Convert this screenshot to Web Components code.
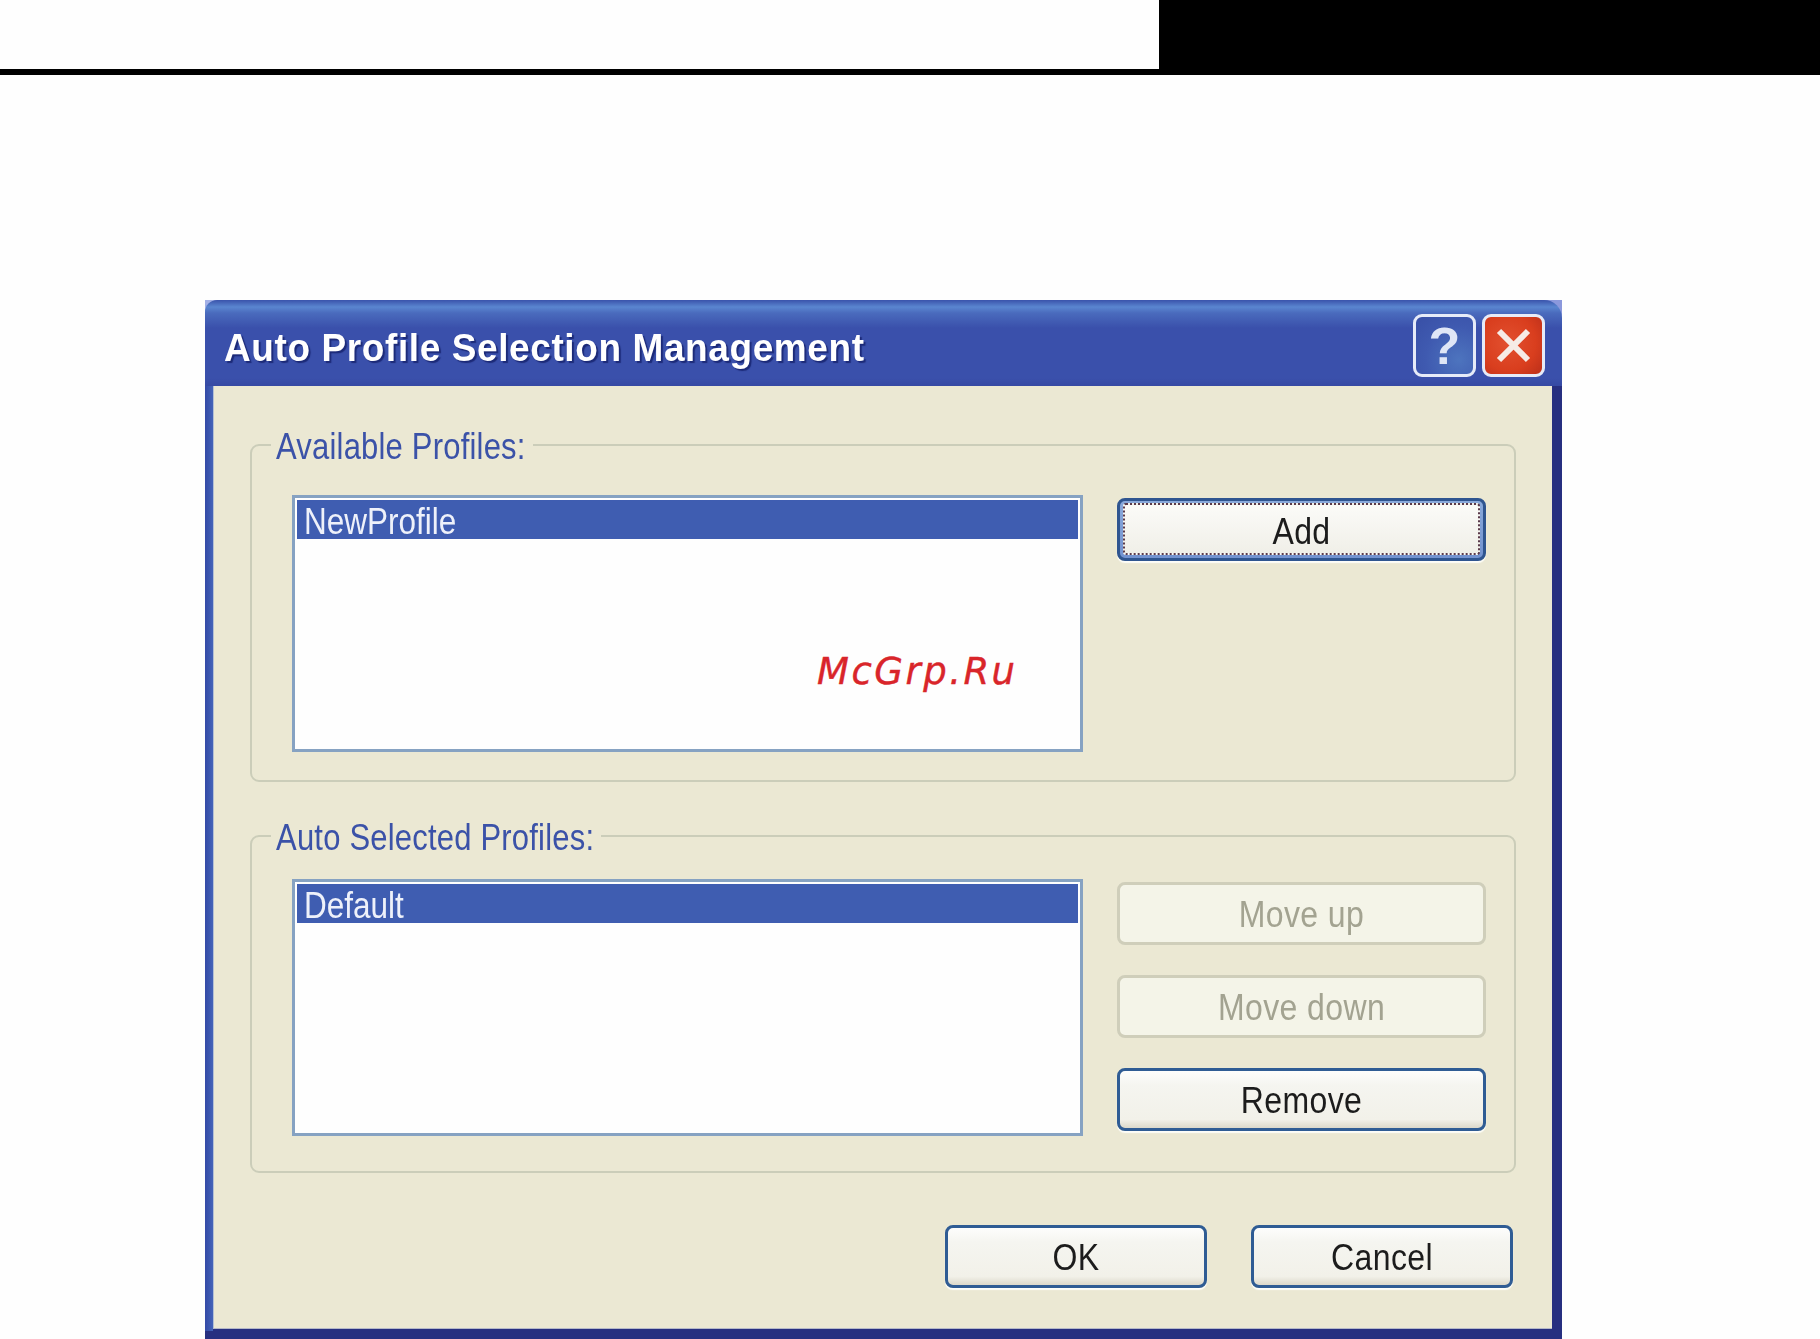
<!DOCTYPE html>
<html>
<head>
<meta charset="utf-8">
<title>Auto Profile Selection Management</title>
<style>
    html,body{
        margin: 0;
        height: 1339px;
        overflow: hidden;
        background: #fefefe;
        font-family: "Liberation Sans", Arial, sans-serif;
    }
</style>
</head>
<body>
<template page-banner>
    <style>
        :host{
            display: flex;
            height: 75px;
            background: #000;
        }
        #blank{
            width: 1159px;
            height: 69px;
            background: #fefefe;
        }
    </style>
    <div id=blank></div>
</template>

<template xp-window>
    <style>
        :host{
            display: flex;
            flex-direction: column;
            width: 1357px;
            height: 1039px;
            margin: 225px 0 0 205px;
            filter: blur(.7px);
        }
        #corners{
            background: linear-gradient(90deg, #a3b0e6 14px, transparent 14px, transparent calc(100% - 18px), #8b98dc calc(100% - 18px));
        }
        #titlebar{
            display: flex;
            height: 86px;
            padding-right: 17px;
            border-radius: 12px 18px 0 0;
            background: linear-gradient(#3a53ab 0, #5a86d0 7px, #4a6bbd 13px, #3a50ab 28px, #3a50ab 78px, #3549a3 86px);
        }
        #title{
            flex: 1;
            padding: 28px 0 0 19px;
            font-size: 37px;
            line-height: 40px;
            font-weight: bold;
            letter-spacing: .6px;
            white-space: nowrap;
            color: #fff;
            text-shadow: 2px 2px 1px #1c2a78;
        }
        #title span{
            display: inline-block;
            transform: scaleY(1.05);
        }
        #caption{
            display: flex;
            gap: 6px;
            padding-top: 14px;
        }
        #frame{
            flex: 1;
            display: flex;
            min-height: 0;
            padding: 0 10px 10px 8px;
            background:
                linear-gradient(90deg, #3349a6, #4464b9) left top / 8px calc(100% - 8px) no-repeat,
                #272f80;
        }
        #client{
            flex: 1;
            display: flex;
            flex-direction: column;
            padding: 39px 36px 0 37px;
            background: #ebe8d3;
            box-shadow: inset 0 -1px 0 #b4b8c8, inset 1px 0 0 #b4bfd4;
        }
        #footer{
            display: flex;
            justify-content: flex-end;
            gap: 44px;
            margin: 18px 3px 0 0;
        }
        ::slotted(xp-group){
            margin-bottom: 34px;
        }
    </style>
    <div id=corners>
        <div id=titlebar>
            <div id=title><span></span></div>
            <div id=caption>
                <xp-caption-button kind="help"></xp-caption-button>
                <xp-caption-button kind="close"></xp-caption-button>
            </div>
        </div>
    </div>
    <div id=frame>
        <div id=client>
            <slot></slot>
            <div id=footer><slot name=footer></slot></div>
        </div>
    </div>
</template>

<template xp-caption-button>
    <style>
        :host{
            display: block;
            width: 63px;
            height: 63px;
        }
        #box{
            box-sizing: border-box;
            display: flex;
            align-items: center;
            justify-content: center;
            height: 100%;
            border: 3px solid #e6ebf8;
            border-radius: 9px;
            color: #dfe6f6;
            font-size: 52px;
            font-weight: bold;
            line-height: 1;
            font-family: "Liberation Sans", Arial, sans-serif;
        }
        #box.help{
            background: radial-gradient(circle at 75% 75%, #4d74be, #3f5ab0 55%, #384fa6);
        }
        #box.close{
            background: radial-gradient(circle at 40% 45%, #e2502f, #d93e1e 60%, #bb2f1a);
        }
        svg{
            width: 41px;
            height: 41px;
        }
    </style>
    <div id=box></div>
</template>

<template xp-group>
    <style>
        :host{
            display: block;
        }
        fieldset{
            margin: 0;
            padding: var(--pad-top) 28px var(--pad-bottom) 40px;
            border: 2px solid #cbcdb9;
            border-radius: 9px;
            min-width: 0;
        }
        legend{
            margin-left: -21px;
            padding: 0 7px 0 5px;
            font-size: 31px;
            line-height: 40px;
            letter-spacing: .2px;
            color: #3b52a8;
        }
        legend span{
            display: inline-block;
            transform: translateY(2px) scaleY(1.18);
        }
        #row{
            display: flex;
            gap: 34px;
        }
        #side{
            display: flex;
            flex-direction: column;
            gap: 30px;
            flex: 1;
            padding-top: 3px;
        }
    </style>
    <fieldset>
        <legend><span></span></legend>
        <div id=row>
            <slot name=list></slot>
            <div id=side><slot></slot></div>
        </div>
    </fieldset>
</template>

<template xp-listbox>
    <style>
        :host{
            display: block;
            box-sizing: border-box;
            width: 791px;
            height: 257px;
            padding: 2px;
            border: 3px solid #86a2c2;
            background: #fefefe;
        }
        #item{
            height: 39px;
            padding-left: 7px;
            background: #3f5db1;
            color: #eef1fa;
            font-size: 31.5px;
            line-height: 39px;
        }
        #item span{
            display: inline-block;
            transform: translateY(2px) scaleY(1.18);
        }
    </style>
    <div id=item><span><slot></slot></span></div>
</template>

<template xp-button>
    <style>
        :host{
            display: block;
            box-sizing: border-box;
            height: 63px;
            border: 3px solid #2f5c94;
            border-radius: 8px;
            background: linear-gradient(#fdfdfc, #f5f5f0 25%, #f2f1e9 85%, #dcd8ca);
            box-shadow: 0 2px 1px #fdfdf8;
            color: #1c1c1c;
            font-size: 32px;
            letter-spacing: .4px;
            text-align: center;
        }
        :host([disabled]){
            border-color: #cfceba;
            background: #f4f4e8;
            box-shadow: none;
            color: #a3a391;
        }
        :host([default]){
            border-color: #2f5590;
            background: linear-gradient(#8aaadb, #7191cf) border-box;
        }
        #face{
            box-sizing: border-box;
            height: 100%;
            line-height: 54px;
        }
        :host([default]) #face{
            margin: 0 3px;
            height: calc(100% - 5px);
            position: relative;
            top: 2px;
            border: 2px dotted #5a3a4a;
            border-radius: 3px;
            background: linear-gradient(#fbfbf8, #f0efe8);
            line-height: 48px;
        }
        span{
            display: inline-block;
            transform: translateY(2px) scaleY(1.15);
        }
    </style>
    <div id=face><span><slot></slot></span></div>
</template>

<template page-watermark>
    <style>
        :host{
            position: absolute;
            left: 817px;
            top: 644px;
            font-family: "DejaVu Sans", sans-serif;
            font-style: oblique;
            font-size: 37px;
            line-height: 56px;
            letter-spacing: 2.5px;
            color: #d9252a;
            -webkit-text-stroke: .4px #d9252a;
        }
    </style>
    <slot></slot>
</template>

<page-banner></page-banner>
<xp-window title-text="Auto Profile Selection Management">
    <xp-group label="Available Profiles:" style="--pad-top:30px;--pad-bottom:28px">
        <xp-listbox slot=list>NewProfile</xp-listbox>
        <xp-button default>Add</xp-button>
    </xp-group>
    <xp-group label="Auto Selected Profiles:" style="--pad-top:23px;--pad-bottom:35px">
        <xp-listbox slot=list>Default</xp-listbox>
        <xp-button disabled>Move up</xp-button>
        <xp-button disabled>Move down</xp-button>
        <xp-button>Remove</xp-button>
    </xp-group>
    <xp-button slot=footer style="width:262px">OK</xp-button>
    <xp-button slot=footer style="width:262px">Cancel</xp-button>
</xp-window>
<page-watermark>McGrp.Ru</page-watermark>

<script>
    function stamp(el, name){
        const template = document.querySelector('template[' + name + ']').content
        el.attachShadow({ mode: 'open' }).appendChild(template.cloneNode(true))
    }

    class PageBanner extends HTMLElement {
        constructor(){
            super()
            stamp(this, 'page-banner')
        }
    }

    class XpWindow extends HTMLElement {
        constructor(){
            super()
            stamp(this, 'xp-window')
        }
        connectedCallback(){
            this.shadowRoot.querySelector('#title span').textContent = this.getAttribute('title-text')
        }
    }

    class XpCaptionButton extends HTMLElement {
        constructor(){
            super()
            stamp(this, 'xp-caption-button')
        }
        connectedCallback(){
            const box = this.shadowRoot.querySelector('#box')
            const kind = this.getAttribute('kind')
            box.className = kind
            if (kind == 'help') {
                box.textContent = '?'
            } else {
                box.innerHTML = '<svg viewBox="0 0 41 41"><path d="M6 6L35 35M35 6L6 35" stroke="#f6ece6" stroke-width="6" fill="none"/></svg>'
            }
        }
    }

    class XpGroup extends HTMLElement {
        constructor(){
            super()
            stamp(this, 'xp-group')
        }
        connectedCallback(){
            this.shadowRoot.querySelector('legend span').textContent = this.getAttribute('label')
        }
    }

    class XpListbox extends HTMLElement {
        constructor(){
            super()
            stamp(this, 'xp-listbox')
        }
    }

    class XpButton extends HTMLElement {
        constructor(){
            super()
            stamp(this, 'xp-button')
        }
    }

    class PageWatermark extends HTMLElement {
        constructor(){
            super()
            stamp(this, 'page-watermark')
        }
    }

    customElements.define('page-banner', PageBanner)
    customElements.define('xp-caption-button', XpCaptionButton)
    customElements.define('xp-listbox', XpListbox)
    customElements.define('xp-button', XpButton)
    customElements.define('xp-group', XpGroup)
    customElements.define('xp-window', XpWindow)
    customElements.define('page-watermark', PageWatermark)
</script>
</body>
</html>
